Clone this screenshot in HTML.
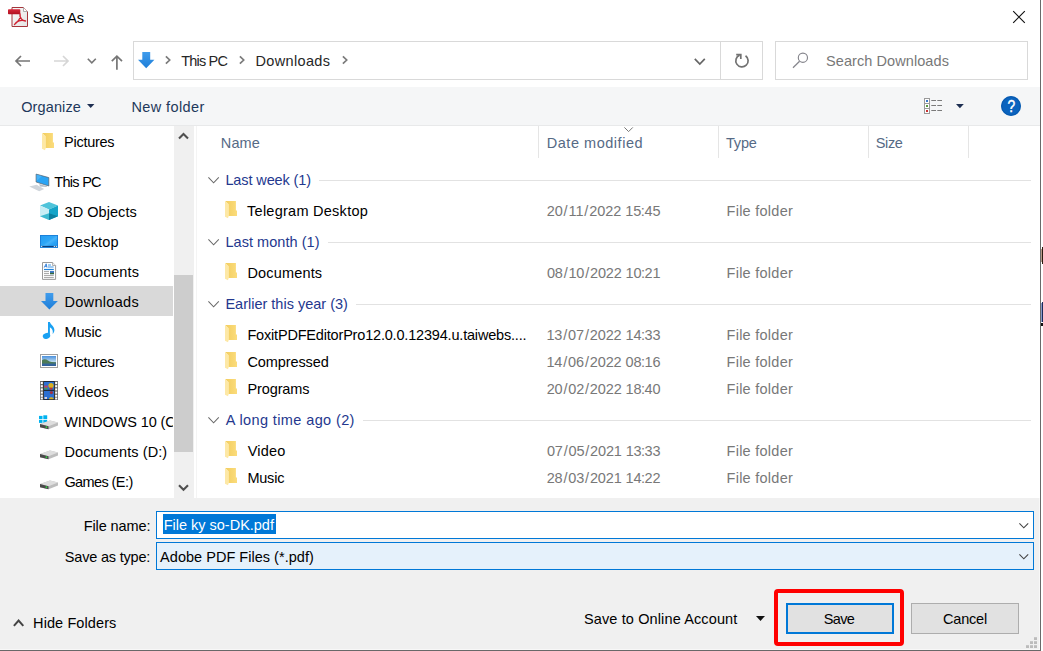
<!DOCTYPE html>
<html>
<head>
<meta charset="utf-8">
<title>Save As</title>
<style>
html,body{margin:0;padding:0;}
body{width:1043px;height:651px;overflow:hidden;background:#fff;position:relative;
 font-family:"Liberation Sans",sans-serif;font-size:14.5px;color:#000;}
#win{position:absolute;left:0;top:0;width:1040px;height:650px;background:#fff;overflow:hidden;}
#rborder{position:absolute;left:1040px;top:0;width:1px;height:651px;background:#6a6a6a;}
#bborder{position:absolute;left:0;top:649px;width:1041px;height:2px;background:linear-gradient(#f8f8f8 0,#f8f8f8 50%,#686868 50%,#686868 100%);}
.t{position:absolute;white-space:nowrap;line-height:20px;height:20px;}
.b{position:absolute;box-sizing:border-box;}
svg{position:absolute;overflow:visible;}
#toolbar{left:0;top:87px;width:1040px;height:39px;background:#f5f6f7;border-bottom:1px solid #e8e9ea;}
#bottom{left:0;top:498px;width:1040px;height:152px;background:#f0f0f0;}
.tb{color:#1e395b;}
.adr{color:#262626;}
.hdr{color:#566a85;}
.grp{color:#24388e;}
.gray{color:#787878;}
.colsep{position:absolute;top:126px;width:1px;height:32px;background:#e5e5e5;}
.gline{position:absolute;height:1px;background:#e2e2e2;}

</style>
</head>
<body>
<div id="win">
  <!-- title icon (pdf) -->
  <svg style="left:8px;top:7px;" width="21" height="20" viewBox="0 0 21 20">
    <defs>
      <linearGradient id="pg" x1="0" y1="0" x2="1" y2="1"><stop offset="0" stop-color="#fafafa"/><stop offset="1" stop-color="#e4e4e4"/></linearGradient>
      <linearGradient id="rl" x1="0" y1="0" x2="0" y2="1"><stop offset="0" stop-color="#d8283a"/><stop offset="1" stop-color="#b01020"/></linearGradient>
    </defs>
    <path d="M4 0.5 H15.5 L19.5 4.5 V19.5 H4 Z" fill="url(#pg)" stroke="#a5363c" stroke-width="1"/>
    <path d="M15.5 0.5 V4.5 H19.5" fill="#fff" stroke="#9a9a9a" stroke-width="0.8"/>
    <rect x="0" y="2.2" width="12.3" height="5" rx="0.8" fill="url(#rl)"/>
    <path d="M12 7 C12.8 10 11 14 6.5 17.5 C8.5 14 13 12.5 17.5 14 C14 13.6 11.5 11 12 7 Z" fill="none" stroke="#d02030" stroke-width="1.4" stroke-linejoin="round"/>
  </svg>
  <!-- close X -->
  <svg style="left:1013px;top:11px;" width="12" height="12" viewBox="0 0 12 12"><path d="M0.2 0.2 L11.8 11.8 M11.8 0.2 L0.2 11.8" stroke="#111" stroke-width="1.15" fill="none"/></svg>
  <!-- nav arrows -->
  <svg style="left:15px;top:55px;" width="16" height="12" viewBox="0 0 16 12"><path d="M15 6 H1.2 M6 1 L1 6 L6 11" stroke="#767676" stroke-width="1.7" fill="none"/></svg>
  <svg style="left:54px;top:55px;" width="16" height="12" viewBox="0 0 16 12"><path d="M0 6 H13.8 M9 1 L14 6 L9 11" stroke="#d6d6d6" stroke-width="1.7" fill="none"/></svg>
  <svg style="left:87px;top:58px;" width="10" height="6" viewBox="0 0 10 6"><path d="M0.8 0.8 L4.8 4.8 L8.8 0.8" stroke="#777" stroke-width="1.6" fill="none"/></svg>
  <svg style="left:111px;top:55px;" width="12" height="15" viewBox="0 0 12 15"><path d="M5.9 14.8 V1.2 M0.8 6.2 L5.9 1.1 L11 6.2" stroke="#767676" stroke-width="1.7" fill="none"/></svg>
  <!-- address bar + search -->
  <div class="b" style="left:133px;top:41px;width:630px;height:39px;border:1px solid #d9d9d9;background:#fff;"></div>
  <div class="b" style="left:720px;top:42px;width:1px;height:37px;background:#d9d9d9;"></div>
  <div class="b" style="left:775px;top:41px;width:253px;height:39px;border:1px solid #d9d9d9;background:#fff;"></div>
  <!-- address icon: download arrow -->
  <svg style="left:138px;top:52px;" width="17" height="17" viewBox="0 0 17 17">
    <defs><linearGradient id="dl" x1="0" y1="0" x2="0" y2="1"><stop offset="0" stop-color="#409cec"/><stop offset="1" stop-color="#1e7ed8"/></linearGradient></defs>
    <path d="M4.3 0 H12.2 V7.8 H16.4 L8.2 16.3 L0 7.8 H4.3 Z" fill="url(#dl)"/>
  </svg>
  <svg style="left:165px;top:56px;" width="6" height="8" viewBox="0 0 6 8"><path d="M0.9 0.4 L4.7 4 L0.9 7.6" stroke="#7a7a7a" stroke-width="1.7" fill="none"/></svg>
  <svg style="left:239px;top:56px;" width="6" height="8" viewBox="0 0 6 8"><path d="M0.9 0.4 L4.7 4 L0.9 7.6" stroke="#7a7a7a" stroke-width="1.7" fill="none"/></svg>
  <svg style="left:341.5px;top:56px;" width="6" height="8" viewBox="0 0 6 8"><path d="M0.9 0.4 L4.7 4 L0.9 7.6" stroke="#7a7a7a" stroke-width="1.7" fill="none"/></svg>
  <!-- address dropdown chevron -->
  <svg style="left:694px;top:58px;" width="12" height="8" viewBox="0 0 12 8"><path d="M0.8 0.8 L5.8 6 L10.8 0.8" stroke="#666" stroke-width="1.7" fill="none"/></svg>
  <!-- refresh -->
  <svg style="left:734px;top:52px;" width="16" height="18" viewBox="0 0 16 18"><path d="M11.53 3.76 A6.15 6.15 0 1 1 5.6 3.1" stroke="#727272" stroke-width="1.7" fill="none"/><path d="M2.2 2.7 H6.8 V7" stroke="#727272" stroke-width="1.7" fill="none"/></svg>
  <!-- search icon -->
  <svg style="left:792px;top:52px;" width="17" height="17" viewBox="0 0 17 17"><circle cx="10.9" cy="5.7" r="4.6" stroke="#85858c" stroke-width="1.15" fill="none"/><path d="M7.6 9.2 L1 15.8" stroke="#85858c" stroke-width="1.25"/></svg>
  <!-- toolbar -->
  <div class="b" id="toolbar"></div>
  <svg style="left:87px;top:103.5px;" width="8" height="4" viewBox="0 0 8 4"><path d="M0 0 H7.4 L3.7 4 Z" fill="#1e2f52"/></svg>
  <!-- view icon -->
  <svg style="left:924px;top:98px;" width="19" height="16" viewBox="0 0 19 16">
    <rect x="0.5" y="0.5" width="5" height="15" fill="#fff" stroke="#9a9a9a" stroke-width="1"/>
    <path d="M0.5 5.5 H5.5 M0.5 10.5 H5.5" stroke="#9a9a9a" stroke-width="1"/>
    <rect x="2" y="2" width="2" height="2" fill="#3a78c8"/><rect x="2" y="7" width="2" height="2" fill="#5a9a40"/><rect x="2" y="12" width="2" height="2" fill="#c83030"/>
    <path d="M7.3 2.5 H12 M13.3 2.5 H18 M7.3 7.5 H12 M13.3 7.5 H18 M7.3 12.5 H12 M13.3 12.5 H18" stroke="#7a7a7a" stroke-width="1"/>
  </svg>
  <svg style="left:955.5px;top:104px;" width="8" height="4" viewBox="0 0 8 4"><path d="M0 0 H7.8 L3.9 4.2 Z" fill="#1e2f52"/></svg>
  <!-- help -->
  <svg style="left:1001px;top:96px;" width="20" height="20" viewBox="0 0 20 20"><circle cx="10" cy="10" r="10" fill="#0a63be"/><circle cx="10" cy="10" r="9.2" fill="none" stroke="#0756a8" stroke-width="0.8"/><text transform="translate(10.3 16.1) scale(0.84 1)" x="0" y="0" text-anchor="middle" font-family="Liberation Sans, sans-serif" font-size="16.4" fill="#fff" stroke="#fff" stroke-width="0.45">?</text></svg>
  <!-- nav pane -->
  <div class="b" style="left:0;top:286px;width:173px;height:30px;background:#d9d9d9;"></div>
<svg style="left:42px;top:133px;" width="13" height="18" viewBox="0 0 13 18"><defs><linearGradient id="fg42_133" x1="0" y1="0" x2="1" y2="0"><stop offset="0" stop-color="#f2cd5e"/><stop offset="1" stop-color="#fbdc7c"/></linearGradient></defs><path d="M0.2 0 H10.9 V9.4 H12 V15 H3 V3 Z" fill="url(#fg42_133)"/><path d="M0 0 L3.9 3.3 V14.4 L3 17.2 L0 15.8 Z" fill="#fde8a6"/></svg>
  <!-- This PC -->
  <svg style="left:29px;top:173px;" width="21" height="19" viewBox="0 0 21 19">
    <path d="M0.3 13.6 L7.6 11.8 L15.2 16 L10.2 18.2 Z" fill="#cfd5db"/>
    <path d="M10.2 11 L18 13.2 L17.6 14 L11 13.6 Z" fill="#b4bec8"/>
    <path d="M7.1 1.1 L19.8 4.6 V13 L7.1 9 Z" fill="#2aa4f4" stroke="#5a6068" stroke-width="0.7"/>
    <path d="M7.6 1.5 L13 3 L7.6 8 Z" fill="#5cbcf8" opacity="0.6"/>
  </svg>
  <!-- 3D Objects -->
  <svg style="left:40px;top:202px;" width="18" height="18" viewBox="0 0 18 18">
    <path d="M9 0 L18 3.6 L9 7.4 L0 3.6 Z" fill="#4fc4da"/>
    <path d="M0 3.6 L9 7.4 V18 L0 14.2 Z" fill="#c8eef5"/>
    <path d="M0 14.2 L9 11.2 V18 Z" fill="#3dbad0"/>
    <path d="M9 7.4 L18 3.6 V14.2 L9 18 Z" fill="#15a4c8"/>
    <path d="M9 11.2 L18 14.2 L9 18 Z" fill="#0c7f9f"/>
  </svg>
  <!-- Desktop -->
  <svg style="left:40px;top:235px;" width="18" height="13" viewBox="0 0 18 13">
    <defs><linearGradient id="dk" x1="0" y1="0" x2="1" y2="1"><stop offset="0" stop-color="#229cf2"/><stop offset="0.45" stop-color="#2ea6f6"/><stop offset="0.55" stop-color="#48b4fa"/><stop offset="0.7" stop-color="#2aa2f4"/><stop offset="1" stop-color="#2097ee"/></linearGradient></defs>
    <rect x="0" y="0" width="18" height="12.8" fill="url(#dk)"/>
    <rect x="0.4" y="0.4" width="17.2" height="12" fill="none" stroke="#1a7ad4" stroke-width="0.8"/>
    <rect x="1" y="10.9" width="16" height="1.1" fill="#0c3f7c"/>
    <rect x="1.2" y="10.9" width="1" height="1.1" fill="#fff"/><rect x="13.8" y="10.9" width="1" height="1.1" fill="#fff"/><rect x="15.8" y="10.9" width="1" height="1.1" fill="#fff"/>
  </svg>
  <!-- Documents -->
  <svg style="left:42px;top:262px;" width="15" height="18" viewBox="0 0 15 18">
    <path d="M0.5 0.5 H10.6 L13.6 3.5 V17.4 H0.5 Z" fill="#fff" stroke="#9a9a9a" stroke-width="1"/>
    <path d="M10.6 0.5 V3.5 H13.6" fill="#f2f2f2" stroke="#9a9a9a" stroke-width="0.8"/>
    <path d="M2.2 5.6 L4.2 1.8 L5 5.6 M2.8 4.3 H4.9" stroke="#2a7ad8" stroke-width="0.9" fill="none"/>
    <path d="M6 3 H9 M6 5 H11.6" stroke="#2a8ae0" stroke-width="0.9"/>
    <path d="M2 7.5 H11.8" stroke="#1e82dc" stroke-width="1.2"/>
    <path d="M2 9.6 H7 M2 11.6 H7 M2 13.6 H11.8 M2 15.6 H11.8" stroke="#8c8c8c" stroke-width="0.8"/>
    <rect x="8" y="9" width="4" height="3.2" fill="#3c78c8"/><rect x="8" y="10.8" width="4" height="1.4" fill="#3a6a3a"/>
  </svg>
  <!-- Downloads -->
  <svg style="left:40.5px;top:293px;" width="17" height="17" viewBox="0 0 17 17">
    <defs><linearGradient id="dl2" x1="0" y1="0" x2="0" y2="1"><stop offset="0" stop-color="#409cec"/><stop offset="1" stop-color="#1e7ed8"/></linearGradient></defs>
    <path d="M4.5 0 H12.3 V8 H16.9 L8.4 16.4 L0 8 H4.5 Z" fill="url(#dl2)"/>
  </svg>
  <!-- Music -->
  <svg style="left:42px;top:322px;" width="13" height="18" viewBox="0 0 13 18">
    <ellipse cx="4.5" cy="13.9" rx="3.8" ry="2.9" fill="#1ba1f2" transform="rotate(-18 4.5 13.9)"/>
    <path d="M6 0 H7.9 C8.4 2.6 12.4 4.4 12.4 8 C12.4 9.8 11.6 11 10.6 12 C11.4 9.4 10.4 6.4 7.9 5.2 V14 H6 Z" fill="#1ba1f2"/>
  </svg>
  <!-- Pictures -->
  <svg style="left:40px;top:354px;" width="18" height="14" viewBox="0 0 18 14">
    <defs><linearGradient id="sky" x1="0" y1="0" x2="0" y2="1"><stop offset="0" stop-color="#4a90dc"/><stop offset="0.55" stop-color="#b8d8f0"/><stop offset="0.7" stop-color="#3a6aa0"/><stop offset="1" stop-color="#2f5f9a"/></linearGradient></defs>
    <rect x="0.5" y="0.5" width="17" height="13" fill="#fff" stroke="#a0a0a0" stroke-width="1"/>
    <rect x="2" y="2" width="14" height="10" fill="url(#sky)"/>
    <path d="M2 6.2 C4 4.6 6 5 8 6.6 C10 8 13 8.4 16 8.6 V9.6 H2 Z" fill="#4d7a55"/>
  </svg>
  <!-- Videos -->
  <svg style="left:40px;top:381px;" width="18" height="19" viewBox="0 0 18 19">
    <rect x="0" y="0" width="18" height="19" fill="#6a6a6a"/>
    <rect x="3.4" y="0" width="11.2" height="19" fill="#1a1a1a"/>
    <g fill="#fff"><rect x="0.8" y="1" width="2" height="2"/><rect x="0.8" y="4.2" width="2" height="2"/><rect x="0.8" y="7.4" width="2" height="2"/><rect x="0.8" y="10.6" width="2" height="2"/><rect x="0.8" y="13.8" width="2" height="2"/><rect x="0.8" y="16.6" width="2" height="1.8"/>
    <rect x="15.2" y="1" width="2" height="2"/><rect x="15.2" y="4.2" width="2" height="2"/><rect x="15.2" y="7.4" width="2" height="2"/><rect x="15.2" y="10.6" width="2" height="2"/><rect x="15.2" y="13.8" width="2" height="2"/><rect x="15.2" y="16.6" width="2" height="1.8"/></g>
    <rect x="4" y="0.8" width="10" height="8" fill="#2b6fd2"/><rect x="4" y="9.8" width="10" height="8.4" fill="#2b6fd2"/>
    <circle cx="11" cy="4.6" r="2.6" fill="#d8b020"/><rect x="9.6" y="6.6" width="2.8" height="2" fill="#c03030"/>
    <rect x="4.4" y="4.6" width="3.2" height="2.2" fill="#c84060"/><rect x="4.4" y="6.8" width="3.2" height="1.6" fill="#40a050"/>
    <circle cx="11.4" cy="11.6" r="1.6" fill="#a03040"/>
    <path d="M9 18.2 C9 15.6 13.6 15.6 13.6 18.2 Z" fill="#d8b020"/><rect x="4.6" y="16" width="2.4" height="2" fill="#d0d0e0"/>
  </svg>
<svg style="left:39px;top:414.6px;" width="19" height="16" viewBox="0 0 19 16"><g fill="#00b2f0"><rect x="0" y="0.9" width="3.5" height="3.1"/><rect x="4.3" y="0.3" width="3.9" height="3.7"/><rect x="0" y="4.8" width="3.5" height="3.1"/><rect x="4.3" y="4.8" width="3.9" height="3.6"/></g><g transform="translate(0 -0.8)"><path d="M1 9.8 L11 6.2 L19 8.2 V11.4 L9.5 15 L1 13 Z" fill="#bdbdbd"/><path d="M1 9.8 L11 6.2 L19 8.2 L9.5 12 Z" fill="#dedede"/><path d="M1 9.9 L9.5 12 V15 L1 13 Z" fill="#4a4a4a"/><circle cx="7.4" cy="13" r="0.85" fill="#30d040"/></g></svg><svg style="left:39px;top:444.6px;" width="19" height="16" viewBox="0 0 19 16"><g transform="translate(0 -0.8)"><path d="M1 9.8 L11 6.2 L19 8.2 V11.4 L9.5 15 L1 13 Z" fill="#bdbdbd"/><path d="M1 9.8 L11 6.2 L19 8.2 L9.5 12 Z" fill="#dedede"/><path d="M1 9.9 L9.5 12 V15 L1 13 Z" fill="#4a4a4a"/><circle cx="7.4" cy="13" r="0.85" fill="#30d040"/></g></svg><svg style="left:39px;top:474.6px;" width="19" height="16" viewBox="0 0 19 16"><g transform="translate(0 -0.8)"><path d="M1 9.8 L11 6.2 L19 8.2 V11.4 L9.5 15 L1 13 Z" fill="#bdbdbd"/><path d="M1 9.8 L11 6.2 L19 8.2 L9.5 12 Z" fill="#dedede"/><path d="M1 9.9 L9.5 12 V15 L1 13 Z" fill="#4a4a4a"/><circle cx="7.4" cy="13" r="0.85" fill="#30d040"/></g></svg>
<!--TEXTS-->
  <div class="b" style="left:173px;top:126px;width:1px;height:372px;background:#fff;"></div>
  <div class="b" style="left:174px;top:126px;width:20px;height:372px;background:#f0f0f0;"></div>
  <div class="b" style="left:174px;top:275px;width:19px;height:177px;background:#cdcdcd;"></div>
  <div class="b" style="left:196px;top:126px;width:1px;height:372px;background:#f4f4f4;"></div>
  <svg style="left:178px;top:132px;" width="11" height="9" viewBox="0 0 11 9"><path d="M1 6.6 L5.5 2.1 L10 6.6" stroke="#505050" stroke-width="2.1" fill="none"/></svg>
  <svg style="left:178px;top:483px;" width="11" height="9" viewBox="0 0 11 9"><path d="M1 2.2 L5.5 6.7 L10 2.2" stroke="#505050" stroke-width="2.1" fill="none"/></svg>
  <!-- column separators -->
  <div class="colsep" style="left:538px;"></div>
  <div class="colsep" style="left:718px;"></div>
  <div class="colsep" style="left:868px;"></div>
  <div class="colsep" style="left:968px;"></div>
  <svg style="left:624px;top:127px;" width="10" height="6" viewBox="0 0 10 6"><path d="M0.4 0.4 L4.6 4.6 L8.8 0.4" stroke="#777" stroke-width="1" fill="none"/></svg>
  <!-- group lines -->
  <div class="gline" style="left:319px;top:180px;width:712px;"></div>
  <div class="gline" style="left:328px;top:242px;width:703px;"></div>
  <div class="gline" style="left:356px;top:304px;width:675px;"></div>
  <div class="gline" style="left:363px;top:420px;width:668px;"></div>
<svg style="left:225px;top:201px;" width="13" height="18" viewBox="0 0 13 18"><defs><linearGradient id="fg225_201" x1="0" y1="0" x2="1" y2="0"><stop offset="0" stop-color="#f2cd5e"/><stop offset="1" stop-color="#fbdc7c"/></linearGradient></defs><path d="M0.2 0 H10.9 V9.4 H12 V15 H3 V3 Z" fill="url(#fg225_201)"/><path d="M0 0 L3.9 3.3 V14.4 L3 17.2 L0 15.8 Z" fill="#fde8a6"/></svg><svg style="left:225px;top:263px;" width="13" height="18" viewBox="0 0 13 18"><defs><linearGradient id="fg225_263" x1="0" y1="0" x2="1" y2="0"><stop offset="0" stop-color="#f2cd5e"/><stop offset="1" stop-color="#fbdc7c"/></linearGradient></defs><path d="M0.2 0 H10.9 V9.4 H12 V15 H3 V3 Z" fill="url(#fg225_263)"/><path d="M0 0 L3.9 3.3 V14.4 L3 17.2 L0 15.8 Z" fill="#fde8a6"/></svg><svg style="left:225px;top:325px;" width="13" height="18" viewBox="0 0 13 18"><defs><linearGradient id="fg225_325" x1="0" y1="0" x2="1" y2="0"><stop offset="0" stop-color="#f2cd5e"/><stop offset="1" stop-color="#fbdc7c"/></linearGradient></defs><path d="M0.2 0 H10.9 V9.4 H12 V15 H3 V3 Z" fill="url(#fg225_325)"/><path d="M0 0 L3.9 3.3 V14.4 L3 17.2 L0 15.8 Z" fill="#fde8a6"/></svg><svg style="left:225px;top:352px;" width="13" height="18" viewBox="0 0 13 18"><defs><linearGradient id="fg225_352" x1="0" y1="0" x2="1" y2="0"><stop offset="0" stop-color="#f2cd5e"/><stop offset="1" stop-color="#fbdc7c"/></linearGradient></defs><path d="M0.2 0 H10.9 V9.4 H12 V15 H3 V3 Z" fill="url(#fg225_352)"/><path d="M0 0 L3.9 3.3 V14.4 L3 17.2 L0 15.8 Z" fill="#fde8a6"/></svg><svg style="left:225px;top:379px;" width="13" height="18" viewBox="0 0 13 18"><defs><linearGradient id="fg225_379" x1="0" y1="0" x2="1" y2="0"><stop offset="0" stop-color="#f2cd5e"/><stop offset="1" stop-color="#fbdc7c"/></linearGradient></defs><path d="M0.2 0 H10.9 V9.4 H12 V15 H3 V3 Z" fill="url(#fg225_379)"/><path d="M0 0 L3.9 3.3 V14.4 L3 17.2 L0 15.8 Z" fill="#fde8a6"/></svg><svg style="left:225px;top:441px;" width="13" height="18" viewBox="0 0 13 18"><defs><linearGradient id="fg225_441" x1="0" y1="0" x2="1" y2="0"><stop offset="0" stop-color="#f2cd5e"/><stop offset="1" stop-color="#fbdc7c"/></linearGradient></defs><path d="M0.2 0 H10.9 V9.4 H12 V15 H3 V3 Z" fill="url(#fg225_441)"/><path d="M0 0 L3.9 3.3 V14.4 L3 17.2 L0 15.8 Z" fill="#fde8a6"/></svg><svg style="left:225px;top:468px;" width="13" height="18" viewBox="0 0 13 18"><defs><linearGradient id="fg225_468" x1="0" y1="0" x2="1" y2="0"><stop offset="0" stop-color="#f2cd5e"/><stop offset="1" stop-color="#fbdc7c"/></linearGradient></defs><path d="M0.2 0 H10.9 V9.4 H12 V15 H3 V3 Z" fill="url(#fg225_468)"/><path d="M0 0 L3.9 3.3 V14.4 L3 17.2 L0 15.8 Z" fill="#fde8a6"/></svg><svg style="left:208px;top:177px;" width="12" height="7" viewBox="0 0 12 7"><path d="M0.4 0.4 L5.6 5.8 L10.8 0.4" stroke="#6a6a6a" stroke-width="1.05" fill="none"/></svg><svg style="left:208px;top:239px;" width="12" height="7" viewBox="0 0 12 7"><path d="M0.4 0.4 L5.6 5.8 L10.8 0.4" stroke="#6a6a6a" stroke-width="1.05" fill="none"/></svg><svg style="left:208px;top:301px;" width="12" height="7" viewBox="0 0 12 7"><path d="M0.4 0.4 L5.6 5.8 L10.8 0.4" stroke="#6a6a6a" stroke-width="1.05" fill="none"/></svg><svg style="left:208px;top:417px;" width="12" height="7" viewBox="0 0 12 7"><path d="M0.4 0.4 L5.6 5.8 L10.8 0.4" stroke="#6a6a6a" stroke-width="1.05" fill="none"/></svg>
  <!-- bottom -->
  <div class="b" id="bottom"></div>
  <div class="b" style="left:156px;top:511px;width:878px;height:28px;border:1px solid #0078d7;background:#fff;"></div>
  <div class="b" style="left:163px;top:514px;width:113px;height:20px;background:#0078d7;"></div>
  <div class="b" style="left:156px;top:542px;width:878px;height:28px;border:1px solid #0078d7;background:#e5f1fb;"></div>
  <svg style="left:1018.5px;top:523px;" width="10" height="6" viewBox="0 0 10 6"><path d="M0.4 0.4 L4.8 4.8 L9.2 0.4" stroke="#444" stroke-width="1.1" fill="none"/></svg>
  <svg style="left:1018.5px;top:554px;" width="10" height="6" viewBox="0 0 10 6"><path d="M0.4 0.4 L4.8 4.8 L9.2 0.4" stroke="#444" stroke-width="1.1" fill="none"/></svg>
  <!-- hide folders chevron -->
  <svg style="left:13px;top:619px;" width="12" height="8" viewBox="0 0 12 8"><path d="M0.9 6.8 L5.6 1.6 L10.3 6.8" stroke="#444" stroke-width="2" fill="none"/></svg>
  <!-- save-to-online triangle -->
  <svg style="left:756px;top:616px;" width="9" height="5" viewBox="0 0 9 5"><path d="M0 0 H9 L4.5 5 Z" fill="#111"/></svg>
  <!-- red highlight -->
  <div class="b" style="left:774px;top:589px;width:130px;height:57px;border:4px solid #f00;border-radius:4px;"></div>
  <!-- buttons -->
  <div class="b" style="left:786px;top:603px;width:108px;height:31px;border:2px solid #0078d7;background:#e1e1e1;"></div>
  <div class="b" style="left:911px;top:603px;width:108px;height:31px;border:1px solid #adadad;background:#e1e1e1;"></div>
  <!-- resize grip -->
  <svg style="left:1026px;top:637px;" width="12" height="12" viewBox="0 0 12 12"><g fill="#bcbcbc"><rect x="8" y="0.2" width="3" height="2.8"/><rect x="4" y="4.2" width="3" height="2.8"/><rect x="8" y="4.2" width="3" height="2.8"/><rect x="0" y="8.2" width="3" height="2.8"/><rect x="4" y="8.2" width="3" height="2.8"/><rect x="8" y="8.2" width="3" height="2.8"/></g></svg>
<div class="t " style="left:32.67px;top:8px;letter-spacing:-0.312px;">Save As</div>
<div class="t adr" style="left:181.20px;top:51px;letter-spacing:-0.809px;">This PC</div>
<div class="t adr" style="left:255.43px;top:51px;letter-spacing:0.354px;">Downloads</div>
<div class="t gray" style="left:826.03px;top:51px;letter-spacing:0.078px;">Search Downloads</div>
<div class="t tb" style="left:21.14px;top:97px;letter-spacing:0.136px;">Organize</div>
<div class="t tb" style="left:131.44px;top:97px;letter-spacing:0.400px;">New folder</div>
<div class="b" style="left:0;top:132px;width:173px;height:20px;overflow:hidden;"><div class="t nav" style="left:64.09px;top:0;letter-spacing:-0.267px;">Pictures</div></div>
<div class="b" style="left:0;top:172px;width:173px;height:20px;overflow:hidden;"><div class="t nav" style="left:54.31px;top:0;letter-spacing:-0.713px;">This PC</div></div>
<div class="b" style="left:0;top:202px;width:173px;height:20px;overflow:hidden;"><div class="t nav" style="left:64.57px;top:0;letter-spacing:0.049px;">3D Objects</div></div>
<div class="b" style="left:0;top:232px;width:173px;height:20px;overflow:hidden;"><div class="t nav" style="left:64.44px;top:0;letter-spacing:0.151px;">Desktop</div></div>
<div class="b" style="left:0;top:262px;width:173px;height:20px;overflow:hidden;"><div class="t nav" style="left:64.44px;top:0;letter-spacing:0.154px;">Documents</div></div>
<div class="b" style="left:0;top:292px;width:173px;height:20px;overflow:hidden;"><div class="t nav" style="left:64.44px;top:0;letter-spacing:0.321px;">Downloads</div></div>
<div class="b" style="left:0;top:322px;width:173px;height:20px;overflow:hidden;"><div class="t nav" style="left:64.44px;top:0;letter-spacing:-0.138px;">Music</div></div>
<div class="b" style="left:0;top:352px;width:173px;height:20px;overflow:hidden;"><div class="t nav" style="left:64.09px;top:0;letter-spacing:-0.267px;">Pictures</div></div>
<div class="b" style="left:0;top:382px;width:173px;height:20px;overflow:hidden;"><div class="t nav" style="left:64.61px;top:0;letter-spacing:0.038px;">Videos</div></div>
<div class="b" style="left:0;top:412px;width:173px;height:20px;overflow:hidden;"><div class="t nav" style="left:64.28px;top:0;letter-spacing:-0.113px;">WINDOWS 10 (C:)</div></div>
<div class="b" style="left:0;top:442px;width:173px;height:20px;overflow:hidden;"><div class="t nav" style="left:64.44px;top:0;letter-spacing:0.094px;">Documents (D:)</div></div>
<div class="b" style="left:0;top:472px;width:173px;height:20px;overflow:hidden;"><div class="t nav" style="left:64.39px;top:0;letter-spacing:-0.587px;">Games (E:)</div></div>
<div class="t hdr" style="left:220.86px;top:133px;letter-spacing:0.095px;">Name</div>
<div class="t hdr" style="left:546.75px;top:133px;letter-spacing:0.528px;">Date modified</div>
<div class="t hdr" style="left:725.94px;top:133px;letter-spacing:-0.159px;">Type</div>
<div class="t hdr" style="left:875.83px;top:133px;letter-spacing:-0.400px;">Size</div>
<div class="t grp" style="left:225.43px;top:170px;letter-spacing:-0.117px;">Last week (1)</div>
<div class="t grp" style="left:225.43px;top:232px;letter-spacing:0.050px;">Last month (1)</div>
<div class="t grp" style="left:225.43px;top:294px;letter-spacing:-0.001px;">Earlier this year (3)</div>
<div class="t grp" style="left:225.84px;top:410px;letter-spacing:0.383px;">A long time ago (2)</div>
<div class="t " style="left:247.05px;top:201px;letter-spacing:0.260px;">Telegram Desktop</div>
<div class="t gray" style="left:546.68px;top:201px;letter-spacing:-0.049px;">20<span style="margin:0 0.9px">/</span>11<span style="margin:0 0.9px">/</span>2022 15<span style="margin:0 -0.45px">:</span>45</div>
<div class="t gray" style="left:726.55px;top:201px;letter-spacing:0.258px;">File folder</div>
<div class="t " style="left:247.43px;top:263px;letter-spacing:0.167px;">Documents</div>
<div class="t gray" style="left:546.90px;top:263px;letter-spacing:-0.135px;">08<span style="margin:0 0.9px">/</span>10<span style="margin:0 0.9px">/</span>2022 10<span style="margin:0 -0.45px">:</span>21</div>
<div class="t gray" style="left:726.55px;top:263px;letter-spacing:0.258px;">File folder</div>
<div class="t " style="left:247.43px;top:325px;letter-spacing:-0.185px;">FoxitPDFEditorPro12.0.0.12394.u.taiwebs....</div>
<div class="t gray" style="left:546.42px;top:325px;letter-spacing:-0.100px;">13<span style="margin:0 0.9px">/</span>07<span style="margin:0 0.9px">/</span>2022 14<span style="margin:0 -0.45px">:</span>33</div>
<div class="t gray" style="left:726.55px;top:325px;letter-spacing:0.258px;">File folder</div>
<div class="t " style="left:247.39px;top:352px;letter-spacing:-0.083px;">Compressed</div>
<div class="t gray" style="left:546.42px;top:352px;letter-spacing:-0.100px;">14<span style="margin:0 0.9px">/</span>06<span style="margin:0 0.9px">/</span>2022 08<span style="margin:0 -0.45px">:</span>16</div>
<div class="t gray" style="left:726.55px;top:352px;letter-spacing:0.258px;">File folder</div>
<div class="t " style="left:247.43px;top:379px;letter-spacing:-0.106px;">Programs</div>
<div class="t gray" style="left:546.68px;top:379px;letter-spacing:-0.121px;">20<span style="margin:0 0.9px">/</span>02<span style="margin:0 0.9px">/</span>2022 18<span style="margin:0 -0.45px">:</span>40</div>
<div class="t gray" style="left:726.55px;top:379px;letter-spacing:0.258px;">File folder</div>
<div class="t " style="left:247.76px;top:441px;letter-spacing:0.194px;">Video</div>
<div class="t gray" style="left:546.90px;top:441px;letter-spacing:-0.132px;">07<span style="margin:0 0.9px">/</span>05<span style="margin:0 0.9px">/</span>2021 13<span style="margin:0 -0.45px">:</span>33</div>
<div class="t gray" style="left:726.55px;top:441px;letter-spacing:0.258px;">File folder</div>
<div class="t " style="left:247.43px;top:468px;letter-spacing:-0.221px;">Music</div>
<div class="t gray" style="left:546.68px;top:468px;letter-spacing:-0.115px;">28<span style="margin:0 0.9px">/</span>03<span style="margin:0 0.9px">/</span>2021 14<span style="margin:0 -0.45px">:</span>22</div>
<div class="t gray" style="left:726.55px;top:468px;letter-spacing:0.258px;">File folder</div>
<div class="t " style="left:83.75px;top:516px;letter-spacing:-0.115px;">File name:</div>
<div class="t " style="left:163.79px;top:515px;letter-spacing:-0.016px;color:#fff;">File ky so-DK.pdf</div>
<div class="t " style="left:64.83px;top:547px;letter-spacing:-0.194px;">Save as type:</div>
<div class="t " style="left:160.10px;top:547px;letter-spacing:0.025px;">Adobe PDF Files (*.pdf)</div>
<div class="t " style="left:33.09px;top:613px;letter-spacing:0.096px;">Hide Folders</div>
<div class="t " style="left:584.03px;top:609px;letter-spacing:0.122px;">Save to Online Account</div>
<div class="t " style="left:823.68px;top:609px;letter-spacing:-0.599px;">Save</div>
<div class="t " style="left:943.05px;top:609px;letter-spacing:-0.198px;">Cancel</div>
</div>
<div class="b" style="left:1039px;top:498px;width:1px;height:151px;background:#f8f8f8;"></div>
<div id="bborder"></div>
<div id="rborder"></div>
<div class="b" style="left:1041px;top:249px;width:1px;height:13px;background:#b89a88;"></div>
<div class="b" style="left:1042px;top:247px;width:1px;height:17px;background:#2a1a10;"></div>
<div class="b" style="left:1041px;top:303px;width:1px;height:19px;background:#8a9ac8;"></div>
<div class="b" style="left:1042px;top:302px;width:1px;height:20px;background:#1a2a5a;"></div>
<div class="b" style="left:1041px;top:323px;width:2px;height:3px;background:#111;"></div>

</body>
</html>
